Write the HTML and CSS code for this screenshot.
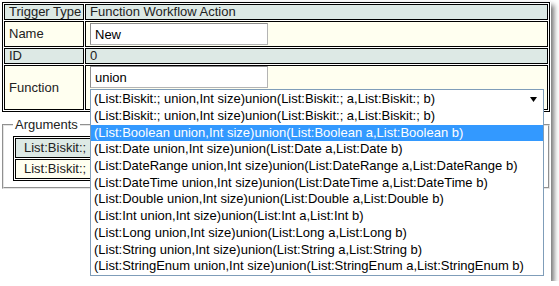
FILE: index.html
```html
<!DOCTYPE html>
<html lang="en">
<head>
    <meta charset="UTF-8">
    <title>Function Workflow Action</title>
    <link rel="stylesheet" href="styles.css">
</head>
<body>
    <div class="window">
        <table class="props">
            <colgroup>
                <col class="label-col">
                <col>
            </colgroup>
            <tr class="row-alt">
                <td class="label">Trigger Type</td>
                <td class="value">Function Workflow Action</td>
            </tr>
            <tr class="row-edit">
                <td class="label">Name</td>
                <td class="value edit-cell"><input class="text-field" type="text" value="New"></td>
            </tr>
            <tr class="row-alt">
                <td class="label">ID</td>
                <td class="value">0</td>
            </tr>
            <tr class="row-edit">
                <td class="label">Function</td>
                <td class="value fn-cell">
                    <input class="text-field fn-field" type="text" value="union">
                    <div class="combo">
                        <span class="combo-text">(List:Biskit:; union,Int size)union(List:Biskit:; a,List:Biskit:; b)</span>
                        <svg class="combo-arrow" width="7" height="5" viewBox="0 0 7 5"><polygon points="0,0 7,0 3.5,5" fill="#000"/></svg>
                        <div class="combo-list">
                            <div class="opt">(List:Biskit:; union,Int size)union(List:Biskit:; a,List:Biskit:; b)</div>
                            <div class="opt selected">(List:Boolean union,Int size)union(List:Boolean a,List:Boolean b)</div>
                            <div class="opt">(List:Date union,Int size)union(List:Date a,List:Date b)</div>
                            <div class="opt">(List:DateRange union,Int size)union(List:DateRange a,List:DateRange b)</div>
                            <div class="opt">(List:DateTime union,Int size)union(List:DateTime a,List:DateTime b)</div>
                            <div class="opt">(List:Double union,Int size)union(List:Double a,List:Double b)</div>
                            <div class="opt">(List:Int union,Int size)union(List:Int a,List:Int b)</div>
                            <div class="opt">(List:Long union,Int size)union(List:Long a,List:Long b)</div>
                            <div class="opt">(List:String union,Int size)union(List:String a,List:String b)</div>
                            <div class="opt">(List:StringEnum union,Int size)union(List:StringEnum a,List:StringEnum b)</div>
                        </div>
                    </div>
                </td>
            </tr>
        </table>

        <fieldset class="args">
            <legend>Arguments</legend>
            <table class="arg-table">
                <tr class="row-alt"><td>List:Biskit:; a</td></tr>
                <tr class="row-edit"><td>List:Biskit:; b</td></tr>
            </table>
        </fieldset>
    </div>
</body>
</html>
```

FILE: styles.css
```css
body {
    margin: 0;
    background: #fff;
    font-family: "Liberation Sans", Arial, sans-serif;
    font-size: 13px;
    color: #222;
}
.window {
    position: relative;
    width: 551px;
    height: 279px;
    background: #fff;
    box-shadow: 3px 3px 5px rgba(0, 0, 0, 0.55);
}
.props {
    table-layout: fixed;
    border-collapse: separate;
    border-spacing: 1px;
    border: 1px solid #000;
    width: 548px;
    margin: 2px 0 0 2px;
}
.label-col {
    width: 80px;
}
.props td {
    border: 1px solid #000;
    padding: 0 4px;
    line-height: 14px;
    white-space: nowrap;
    overflow: visible;
}
.props td.label {
    padding: 0 1px 0 4px;
}
.row-alt td {
    background: #dde9e5;
}
.row-edit td {
    background: #fffff0;
}
.props td.edit-cell {
    padding: 1px 4px;
}
.text-field {
    box-sizing: border-box;
    width: 178px;
    height: 22px;
    margin: 0;
    padding: 0 4px;
    border: 1px solid #b4b4b4;
    border-top-color: #8d8d8d;
    border-left-color: #8d8d8d;
    font-family: "Liberation Sans", Arial, sans-serif;
    font-size: 13px;
    color: #000;
    background: #fff;
    vertical-align: middle;
}
.fn-field {
    display: block;
    margin-bottom: 1px;
}
.combo {
    position: relative;
    box-sizing: border-box;
    width: 454px;
    height: 20px;
    display: flex;
    align-items: center;
    justify-content: space-between;
    padding: 0 6px 0 3px;
    border: 1px solid #7f9db9;
    background: #fff;
    color: #000;
}
.combo-list {
    position: absolute;
    left: -1px;
    top: 100%;
    width: 454px;
    box-sizing: border-box;
    border: 1px solid #7f9db9;
    border-top: none;
    background: #fff;
    z-index: 5;
}
.opt {
    height: 16.7px;
    line-height: 16.7px;
    padding-left: 3px;
    color: #000;
}
.opt.selected {
    background: #3399ff;
    color: #fff;
}
.args {
    margin: 5px 1px 0 2px;
    padding: 0 8px 6px 9px;
    border: 2px groove #e4e4e4;
}
.args legend {
    padding: 0 2px;
    color: #222;
}
.arg-table {
    border-collapse: separate;
    border-spacing: 1px;
    border: 1px solid #000;
    margin-top: 4px;
}
.arg-table td {
    border: 1px solid #000;
    padding: 2px 8px;
    line-height: 14px;
    white-space: nowrap;
}
```
